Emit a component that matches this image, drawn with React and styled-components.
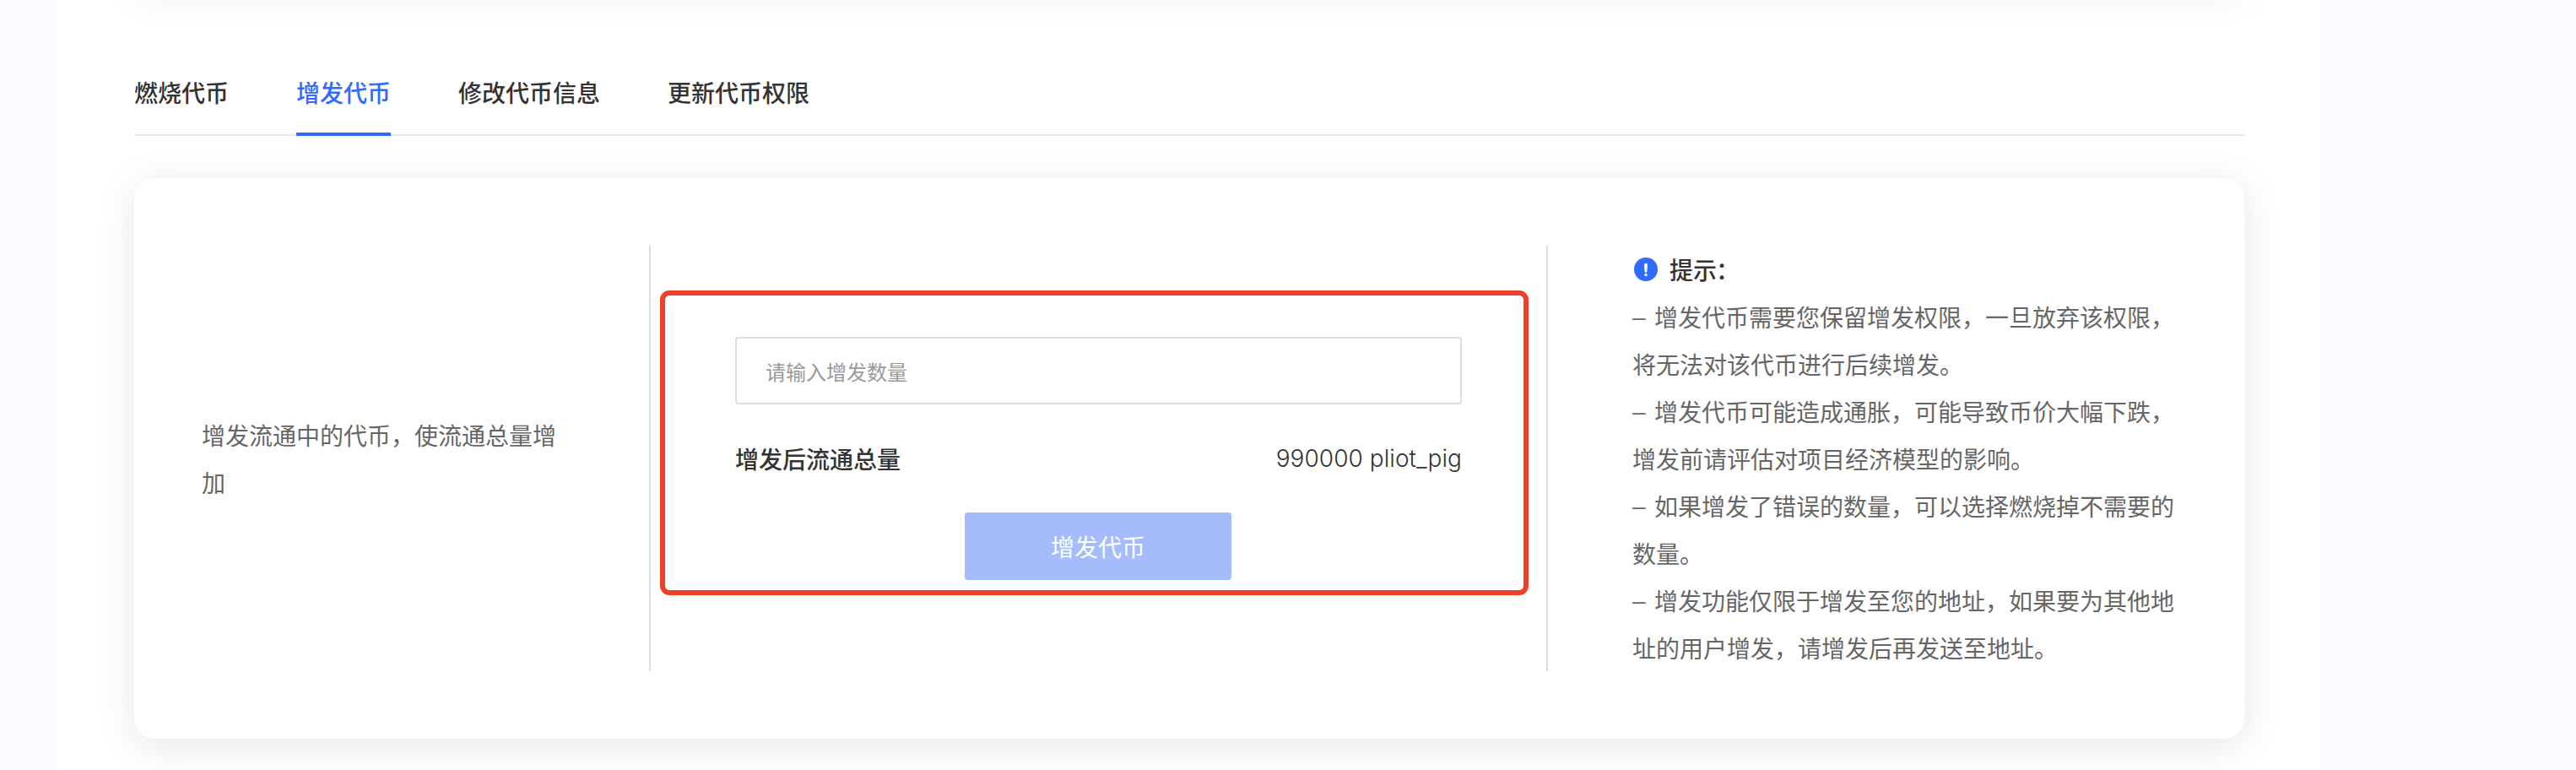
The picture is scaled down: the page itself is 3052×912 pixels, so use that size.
import React from "react";
import styled, { createGlobalStyle } from "styled-components";

const GlobalStyle = createGlobalStyle`
  * { box-sizing: border-box; }
  body {
    margin: 0;
    background: #fafbff;
    font-family: "Noto Sans CJK SC", sans-serif;
    overflow: hidden;
  }
`;

const Page = styled.main`
  width: 2680px;
  height: 912px;
  margin-left: 69px;
  padding: 0 90px;
  background: #fff;
  overflow: hidden;
`;

const cardShadow = "0 8px 48px rgba(10, 22, 40, 0.1)";

const PreviousCard = styled.section`
  height: 24px;
  margin-top: -42px;
  border-radius: 24px;
  background: #fff;
  box-shadow: ${cardShadow};
`;

const Tabs = styled.nav`
  display: flex;
  gap: 80px;
  height: 102px;
  margin-top: 77px;
  border-bottom: 2px solid #e6e8ec;
`;

const Tab = styled.button`
  height: 102px;
  padding: 1px 0 0;
  border: 0;
  border-bottom: 4px solid ${(p) => (p.$active ? "#2f6bff" : "transparent")};
  background: none;
  font: 500 28px/96px "Noto Sans CJK SC", sans-serif;
  color: ${(p) => (p.$active ? "#2f6bff" : "#333")};
`;

const Card = styled.section`
  display: flex;
  height: 664px;
  margin-top: 50px;
  padding: 80px;
  border-radius: 24px;
  background: #fff;
  box-shadow: ${cardShadow};
`;

const Intro = styled.div`
  display: flex;
  align-items: center;
  width: 532px;
  padding-right: 105px;
  border-right: 2px solid #d7dce6;
  font-size: 28px;
  line-height: 56px;
  color: #666;
`;

const FormColumn = styled.div`
  display: flex;
  width: 1063px;
  padding: 53px 22px 90px 11px;
  border-right: 2px solid #d7dce6;
`;

const Highlight = styled.div`
  display: flex;
  flex-direction: column;
  align-items: center;
  width: 1029px;
  height: 361px;
  padding: 49px 73px 0 83px;
  border: 6px solid #ec4126;
  border-radius: 11px;
`;

const AmountInput = styled.input`
  width: 861px;
  height: 80px;
  flex: none;
  padding: 0 34px;
  border: 2px solid #d9dde7;
  border-radius: 4px;
  outline: 0;
  background: #fff;
  font: 24px "Noto Sans CJK SC", sans-serif;
  color: #333;
  &::placeholder { color: #999; opacity: 1; }
`;

const Summary = styled.div`
  display: flex;
  justify-content: space-between;
  width: 861px;
  margin-top: 36px;
  font-size: 28px;
  line-height: 56px;
  color: #333;
`;

const SummaryLabel = styled.span`
  font-weight: 500;
`;

const SummaryValue = styled.span`
  padding-top: 1px;
  font-family: Inter, sans-serif;
  font-weight: 350;
  line-height: 55px;
  letter-spacing: 0.06px;
`;

const SubmitButton = styled.button`
  width: 316px;
  height: 80px;
  flex: none;
  margin: 36px 1px 0 0;
  padding: 0;
  border: 0;
  border-radius: 4px;
  background: #a4bcfb;
  font: 28px "Noto Sans CJK SC", sans-serif;
  color: #fff;
`;

const Tips = styled.aside`
  width: 665px;
  padding-left: 100px;
  font-size: 28px;
  line-height: 56px;
  color: #666;
`;

const TipsTitle = styled.div`
  display: flex;
  align-items: center;
  gap: 14px;
  padding-left: 2px;
  font-weight: 500;
  color: #333;
`;

const Colon = styled.span`
  margin-left: -1px;
`;

const Tip = styled.p`
  margin: 0;
  white-space: nowrap;
`;

const Dash = styled.span`
  display: inline-block;
  width: 26px;
  font-family: "Liberation Sans", sans-serif;
  line-height: 1;
  vertical-align: 2px;
`;

const InfoIcon = () => (
  <svg width="28" height="28" viewBox="0 0 28 28">
    <circle cx="14" cy="14" r="14" fill="#2f6bff" />
    <path d="M12.1 8.6a1.9 1.9 0 0 1 3.8 0l-.5 7.8a1.4 1.4 0 0 1-2.8 0z" fill="#fff" />
    <circle cx="14" cy="20.5" r="1.7" fill="#fff" />
  </svg>
);

const tabs = ["燃烧代币", "增发代币", "修改代币信息", "更新代币权限"];

const tips = [
  ["增发代币需要您保留增发权限，一旦放弃该权限，", "将无法对该代币进行后续增发。"],
  ["增发代币可能造成通胀，可能导致币价大幅下跌，", "增发前请评估对项目经济模型的影响。"],
  ["如果增发了错误的数量，可以选择燃烧掉不需要的", "数量。"],
  ["增发功能仅限于增发至您的地址，如果要为其他地", "址的用户增发，请增发后再发送至地址。"],
];

export default function App() {
  return (
    <>
      <GlobalStyle />
      <Page>
        <PreviousCard />
        <Tabs>
          {tabs.map((name, i) => (
            <Tab key={name} $active={i === 1}>{name}</Tab>
          ))}
        </Tabs>
        <Card>
          <Intro>增发流通中的代币，使流通总量增加</Intro>
          <FormColumn>
            <Highlight>
              <AmountInput placeholder="请输入增发数量" />
              <Summary>
                <SummaryLabel>增发后流通总量</SummaryLabel>
                <SummaryValue>990000 pliot_pig</SummaryValue>
              </Summary>
              <SubmitButton>增发代币</SubmitButton>
            </Highlight>
          </FormColumn>
          <Tips>
            <TipsTitle>
              <InfoIcon />
              <span>提示<Colon>：</Colon></span>
            </TipsTitle>
            {tips.map(([first, second]) => (
              <Tip key={first}>
                <Dash>–</Dash>
                {first}
                <br />
                {second}
              </Tip>
            ))}
          </Tips>
        </Card>
      </Page>
    </>
  );
}
